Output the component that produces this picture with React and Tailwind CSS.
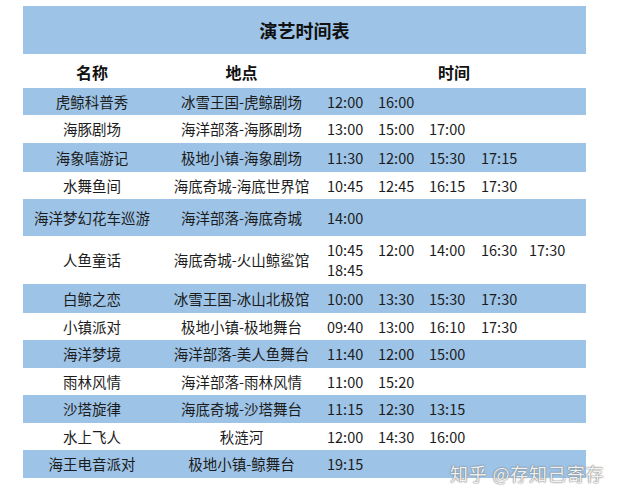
import React from "react";

const rows = [
  { n: "虎鲸科普秀", l: "冰雪王国-虎鲸剧场", t: ["12:00", "16:00"], h: "h-[27px]" },
  { n: "海豚剧场", l: "海洋部落-海豚剧场", t: ["13:00", "15:00", "17:00"], h: "h-[28px]" },
  { n: "海象嘻游记", l: "极地小镇-海象剧场", t: ["11:30", "12:00", "15:30", "17:15"], h: "h-[29px]" },
  { n: "水舞鱼间", l: "海底奇城-海底世界馆", t: ["10:45", "12:45", "16:15", "17:30"], h: "h-[27px]" },
  { n: "海洋梦幻花车巡游", l: "海洋部落-海底奇城", t: ["14:00"], h: "h-[37px]" },
  { n: "人鱼童话", l: "海底奇城-火山鲸鲨馆", t: ["10:45", "12:00", "14:00", "16:30", "17:30"], t2: "18:45", h: "h-[48px]" },
  { n: "白鲸之恋", l: "冰雪王国-冰山北极馆", t: ["10:00", "13:30", "15:30", "17:30"], h: "h-[29px]" },
  { n: "小镇派对", l: "极地小镇-极地舞台", t: ["09:40", "13:00", "16:10", "17:30"], h: "h-[27px]" },
  { n: "海洋梦境", l: "海洋部落-美人鱼舞台", t: ["11:40", "12:00", "15:00"], h: "h-[28px]" },
  { n: "雨林风情", l: "海洋部落-雨林风情", t: ["11:00", "15:20"], h: "h-[27px]" },
  { n: "沙塔旋律", l: "海底奇城-沙塔舞台", t: ["11:15", "12:30", "13:15"], h: "h-[28px]" },
  { n: "水上飞人", l: "秋涟河", t: ["12:00", "14:30", "16:00"], h: "h-[27px]" },
  { n: "海王电音派对", l: "极地小镇-鲸舞台", t: ["19:15"], h: "h-[28px]" },
];

const tw = ["w-[51px]", "w-[51px]", "w-[52px]", "w-[48px]", "w-[50px]"];

function Times({ t }) {
  return (
    <div className="flex">
      {t.map((x, i) => (
        <span key={i} className={`${tw[i]} whitespace-nowrap`}>{x}</span>
      ))}
    </div>
  );
}

export default function App() {
  return (
    <div
      className="relative w-[618px] h-[500px] bg-white text-[#1c1c1c]"
      style={{ fontFamily: '"Noto Sans CJK SC", "Noto Sans", sans-serif' }}
    >
      <div className="pt-[6px] pl-[23px]">
        <div className="w-[563px]">
          <div className="h-[48px] bg-[#9dc3e6] flex items-center justify-center text-[18px] font-bold text-[#111]">
            演艺时间表
          </div>
          <div className="h-[34px] flex items-center text-[16px] font-bold text-[#111] pt-[2px]">
            <div className="w-[138px] text-center">名称</div>
            <div className="w-[161px] text-center">地点</div>
            <div className="flex-1 text-center">时间</div>
          </div>
          {rows.map((r, i) => (
            <div
              key={i}
              className={`${r.h} flex items-center text-[14.5px] leading-[20px] ${i % 2 === 0 ? "bg-[#9dc3e6]" : "bg-white"}`}
            >
              <div className="w-[138px] text-center whitespace-nowrap">{r.n}</div>
              <div className="w-[161px] text-center whitespace-nowrap">{r.l}</div>
              <div className="pl-[5px] flex flex-col">
                <Times t={r.t} />
                {r.t2 && <span>{r.t2}</span>}
              </div>
            </div>
          ))}
        </div>
      </div>
      <div
        className="absolute left-[450px] top-[460px] text-[18px] text-white/90 whitespace-nowrap tracking-[0.8px]"
        style={{ textShadow: "0 0 1px #666, 0 0 2px #888" }}
      >
        知乎 @存知己寄存
      </div>
    </div>
  );
}
